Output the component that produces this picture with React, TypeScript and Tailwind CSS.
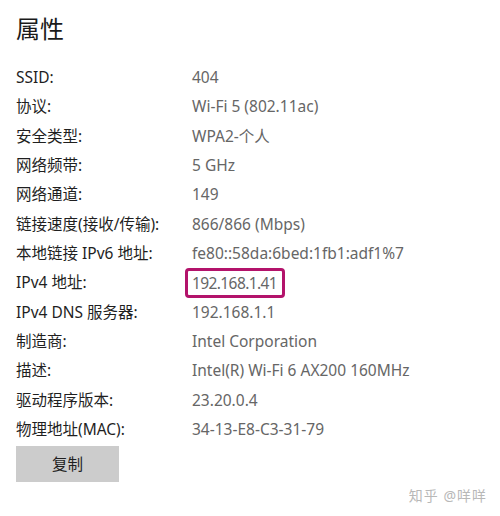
import React from "react";

const rows: [string, string][] = [
  ["SSID:", "404"],
  ["协议:", "Wi-Fi 5 (802.11ac)"],
  ["安全类型:", "WPA2-个人"],
  ["网络频带:", "5 GHz"],
  ["网络通道:", "149"],
  ["链接速度(接收/传输):", "866/866 (Mbps)"],
  ["本地链接 IPv6 地址:", "fe80::58da:6bed:1fb1:adf1%7"],
  ["IPv4 地址:", "192.168.1.41"],
  ["IPv4 DNS 服务器:", "192.168.1.1"],
  ["制造商:", "Intel Corporation"],
  ["描述:", "Intel(R) Wi-Fi 6 AX200 160MHz"],
  ["驱动程序版本:", "23.20.0.4"],
  ["物理地址(MAC):", "34-13-E8-C3-31-79"],
];

export default function App() {
  return (
    <div
      className="relative w-[500px] h-[516px] bg-white overflow-hidden"
      style={{ fontFamily: '"Noto Sans", "Noto Sans CJK SC", sans-serif' }}
    >
      <div className="pl-4 pt-[12px]">
        <h1 className="text-[24px] leading-[34px] text-[#1a1a1a] font-normal">属性</h1>
        <div className="mt-[17px] flex flex-col">
          {rows.map(([k, v]) => (
            <div key={k} className="flex h-[29.33px] items-center text-[15.5px]">
              <div className="w-[176px] text-[#1f1f1f]">{k}</div>
              <div className="text-[#666666] whitespace-nowrap">
                {k === "IPv4 地址:" ? (
                  <span className="-ml-[7px] inline-block h-[30px] rounded-[4px] border-[3px] border-[#b3136b] pl-[4px] pr-[5px] leading-[24px] tracking-[-0.6px]">
                    {v}
                  </span>
                ) : (
                  v
                )}
              </div>
            </div>
          ))}
        </div>
        <button className="mt-[2px] w-[103px] h-[36px] bg-[#cccccc] text-[15.5px] text-[#1f1f1f]">
          复制
        </button>
      </div>
      <div className="absolute right-[13px] bottom-[10px] text-[14px] tracking-[1px] text-[#b8b8b8]">
        知乎 @咩咩
      </div>
    </div>
  );
}
